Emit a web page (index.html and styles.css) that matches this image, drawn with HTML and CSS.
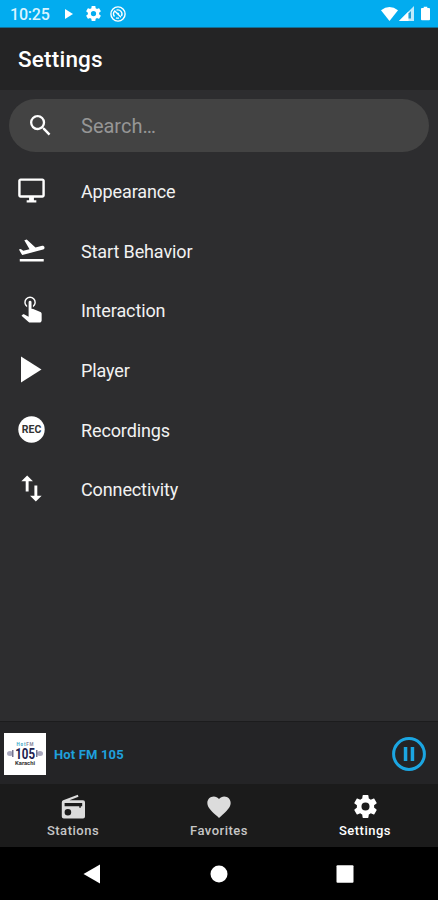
FILE: index.html
```html
<!DOCTYPE html>
<html lang="en">
<head>
<meta charset="utf-8">
<title>Settings</title>
<link rel="stylesheet" href="styles.css">
</head>
<body>
<svg class="defs" aria-hidden="true"><symbol id="gear" viewBox="2 2 20 20"><path d="M12,15.5A3.5,3.5 0 0,1 8.5,12A3.5,3.5 0 0,1 12,8.5A3.5,3.5 0 0,1 15.5,12A3.5,3.5 0 0,1 12,15.5M19.43,12.97C19.47,12.65 19.5,12.33 19.5,12C19.5,11.67 19.47,11.34 19.43,11L21.54,9.37C21.73,9.22 21.78,8.95 21.66,8.73L19.66,5.27C19.54,5.05 19.27,4.96 19.05,5.05L16.56,6.05C16.04,5.66 15.5,5.32 14.87,5.07L14.5,2.42C14.46,2.18 14.25,2 14,2H10C9.75,2 9.54,2.18 9.5,2.42L9.13,5.07C8.5,5.32 7.96,5.66 7.44,6.05L4.95,5.05C4.73,4.96 4.46,5.05 4.34,5.27L2.34,8.73C2.21,8.95 2.27,9.22 2.46,9.37L4.57,11C4.53,11.34 4.5,11.67 4.5,12C4.5,12.33 4.53,12.65 4.57,12.97L2.46,14.63C2.27,14.78 2.21,15.05 2.34,15.27L4.34,18.73C4.46,18.95 4.73,19.03 4.95,18.95L7.44,17.94C7.96,18.34 8.5,18.68 9.13,18.93L9.5,21.58C9.54,21.82 9.75,22 10,22H14C14.25,22 14.46,21.82 14.5,21.58L14.87,18.93C15.5,18.67 16.04,18.34 16.56,17.94L19.05,18.95C19.27,19.03 19.54,18.95 19.66,18.73L21.66,15.27C21.78,15.05 21.73,14.78 21.54,14.63L19.43,12.97Z"/></symbol></svg>
<div class="screen">
  <div class="status">
    <span class="clock">10:25</span>
    <svg class="st-play" viewBox="0 0 8 10"><path d="M0 0L8 5L0 10Z"/></svg>
    <svg class="st-gear"><use href="#gear"/></svg>
    <svg class="st-sync" viewBox="0 0 16 16"><circle cx="8" cy="8" r="7.1" class="line"/><path class="line" d="M4.500 10.500A4.200 4.200 0 0 1 4.800 5L11 11.200M6.500 4.100A4.200 4.200 0 0 1 11.500 10M7.500 7L8.800 8.300M6 11.800A4.200 4.200 0 0 0 9 11.900"/></svg>
    <span class="grow"></span>
    <svg class="st-wifi" viewBox="0 0 17 14"><path d="M0 3.2Q8.500 -3 17 3.200L8.500 14Z"/></svg>
    <svg class="st-cell" viewBox="0 0 15 15"><path d="M0 15L15 0V15Z" opacity=".75"/><path d="M0 15L9.500 5.500V15Z"/><path class="cut" d="M9.500 7.500L12 5V12.500H9.500Z"/></svg>
    <svg class="st-bat" viewBox="0 0 10 15"><path d="M3 0H7V1.500H9Q10 1.500 10 2.500V14Q10 15 9 15H1Q0 15 0 14V2.500Q0 1.500 1 1.500H3Z"/></svg>
  </div>
  <header class="header"><h1>Settings</h1></header>
  <main class="content">
    <div class="search">
      <svg class="search-icon" viewBox="3 3 18 18"><path d="M15.500 14h-.79l-.28-.27A6.471 6.471 0 0 0 16 9.500 6.500 6.500 0 1 0 9.500 16c1.610 0 3.090-.59 4.230-1.570l.27.28v.79l5 4.990L20.490 19l-4.990-5zm-6 0C7.010 14 5 11.990 5 9.500S7.010 5 9.500 5 14 7.010 14 9.500 11.990 14 9.500 14z"/></svg>
      <span>Search…</span>
    </div>
    <ul class="list">
      <li><svg viewBox="0 0 24 24"><path d="M21 2H3c-1.100 0-2 .9-2 2v12c0 1.100.9 2 2 2h7v2H8v2h8v-2h-2v-2h7c1.100 0 2-.9 2-2V4c0-1.100-.9-2-2-2zm0 14H3V4h18v12z"/></svg><span>Appearance</span></li>
      <li><svg viewBox="0.300 0.800 23 23"><path d="M2.500 19h19v2h-19zm19.570-9.360c-.21-.8-1.040-1.280-1.840-1.060L14.920 10l-6.900-6.430-1.930.51 4.140 7.170-4.970 1.330-1.970-1.540-1.450.39 1.820 3.160.77 1.330 1.600-.43 5.310-1.420 4.350-1.160L21 11.490c.81-.23 1.280-1.050 1.070-1.850z"/></svg><span>Start Behavior</span></li>
      <li><svg viewBox="2 4 20 20"><path d="M10,9A1,1 0 0,1 11,8A1,1 0 0,1 12,9V13.47L13.21,13.6L18.15,15.79C18.68,16.03 19,16.56 19,17.14V21.5C18.97,22.32 18.32,22.97 17.5,23H11C10.62,23 10.26,22.85 10,22.57L5.1,18.37L5.84,17.6C6.03,17.39 6.3,17.28 6.58,17.28H6.8L10,19V9M11,5A4,4 0 0,1 15,9C15,10.5 14.2,11.77 13,12.46V11.24C13.61,10.69 14,9.89 14,9A3,3 0 0,0 11,6A3,3 0 0,0 8,9C8,9.89 8.39,10.69 9,11.24V12.46C7.8,11.77 7,10.5 7,9A4,4 0 0,1 11,5Z"/></svg><span>Interaction</span></li>
      <li><svg viewBox="0 0 29 29"><path d="M4 1.500L24.500 14.500L4 27.500Z"/></svg><span>Player</span></li>
      <li><svg viewBox="0 0 29 29"><circle cx="14.500" cy="14.500" r="13.200"/><text class="rec" x="4.800" y="18.300" textLength="19.500">REC</text></svg><span>Recordings</span></li>
      <li><svg viewBox="2 2 20 20"><path d="M9,3L5,7H8V14H10V7H13M16,17V10H14V17H11L15,21L19,17H16Z"/></svg><span>Connectivity</span></li>
    </ul>
  </main>
  <section class="player">
    <svg class="cover" viewBox="0 0 42 42">
      <rect width="42" height="42" fill="#fff"/>
      <g fill="#a9a9bf"><ellipse cx="6" cy="20.500" rx="3" ry="2.500"/><ellipse cx="36" cy="20.500" rx="3" ry="2.500"/></g>
      <g fill="#74748f"><rect x="8" y="17" width="1.500" height="7"/><rect x="32" y="17" width="1.500" height="7"/></g>
      <text class="c-top" x="12.500" y="12.500" textLength="17"><tspan fill="#39a8c8">Hot</tspan><tspan fill="#85859a">FM</tspan></text>
      <text class="c-num" x="11.200" y="25.600" textLength="19.800" lengthAdjust="spacingAndGlyphs">105</text>
      <text class="c-bot" x="11" y="31.600" textLength="20" lengthAdjust="spacingAndGlyphs">Karachi</text>
    </svg>
    <span class="track">Hot FM 105</span>
    <svg class="pause" viewBox="0 0 36 36"><circle cx="18" cy="18" r="15.400"/><path d="M12.800 11H16.300V25H12.800ZM19.700 11H23.200V25H19.700Z"/></svg>
  </section>
  <nav class="tabs">
    <div class="tab">
      <svg viewBox="0 0 28 28"><path fill-rule="evenodd" d="M4.200 7.300L18.800 1.800L19.500 3.700L10.500 7.200H24Q26 7.200 26 9.200V23.500Q26 25.500 24 25.500H4.800Q2.800 25.500 2.800 23.500V9.500Q2.800 7.900 4.200 7.300ZM5.600 10V13.200H20.300V14.800H21.800V13.200H23.200V10ZM8.900 16A3.300 3.300 0 1 0 8.900 22.600A3.300 3.300 0 1 0 8.900 16Z"/></svg>
      <span>Stations</span>
    </div>
    <div class="tab">
      <svg viewBox="0 0 24 24"><path d="M12 21.350l-1.450-1.320C5.400 15.360 2 12.280 2 8.500 2 5.420 4.420 3 7.500 3c1.740 0 3.410.81 4.500 2.090C13.090 3.810 14.760 3 16.500 3 19.580 3 22 5.420 22 8.500c0 3.780-3.400 6.860-8.550 11.540L12 21.350z"/></svg>
      <span>Favorites</span>
    </div>
    <div class="tab active">
      <svg class="tab-gear"><use href="#gear"/></svg>
      <span>Settings</span>
    </div>
  </nav>
  <div class="sysnav">
    <svg viewBox="0 0 18 20"><path d="M0.500 10L17 0.500V19.500Z"/></svg>
    <svg viewBox="0 0 18 20"><circle cx="9" cy="10" r="8.500"/></svg>
    <svg viewBox="0 0 18 20"><rect x="0.500" y="1.300" width="17" height="17.400" rx="1"/></svg>
  </div>
</div>
</body>
</html>
```
FILE: styles.css
```css
* { box-sizing: border-box; }
body { margin: 0; background: #000; font-family: Roboto, sans-serif; }
svg { display: block; flex: none; fill: #fff; }
.defs { position: absolute; width: 0; height: 0; }
.screen { width: 438px; height: 900px; display: flex; flex-direction: column; overflow: hidden; background: #2d2d2f; color: #f2f2f2; }

.status { height: 28px; flex: none; display: flex; align-items: center; background: #02acef; padding: 0 8px 0 10px; border-bottom: 1px solid #146f96; }
.clock { width: 55px; font-size: 16px; font-weight: 500; color: #d9f4ff; letter-spacing: -.2px; padding-top: 2px; }
.st-play { width: 8px; height: 10px; margin-right: 13px; }
.st-gear { width: 15px; height: 15px; margin-right: 9px; }
.st-sync { width: 16px; height: 16px; }
.line { fill: none; stroke: #fff; stroke-width: 1.4; }
.grow { flex: 1; }
.st-wifi { width: 17px; height: 14px; margin-right: 1px; }
.st-cell { width: 15px; height: 15px; margin-right: 7px; }
.cut { fill: #249fd2; }
.st-bat { width: 9px; height: 15px; }

.header { height: 62px; flex: none; display: flex; align-items: center; padding-left: 18px; background: #242425; }
h1 { margin: 0; font-size: 22.5px; line-height: 26px; font-weight: 500; letter-spacing: .2px; color: #fff; }

.content { flex: 1; min-height: 0; padding: 9px 9px 0; }
.search { height: 53px; border-radius: 27px; display: flex; align-items: center; padding-left: 21px; background: #434343; color: #969696; font-size: 20px; }
.search-icon { width: 21px; height: 21px; margin: 0 30px 1px 0; }
.list { list-style: none; margin: 9px 0 0; padding: 0 0 0 8px; }
.list li { height: 59.6px; display: flex; align-items: center; font-size: 18px; letter-spacing: -.12px; }
.list svg { width: 29px; height: 29px; margin-right: 35px; }
.list span { padding-top: 2px; }
.rec { font: 700 10.5px Roboto, sans-serif; letter-spacing: 0; fill: #333; }

.player { height: 63px; flex: none; display: flex; align-items: center; padding: 1px 11px 0 4px; background: #242426; border-top: 1px solid #1c1c1d; }
.cover { width: 42px; height: 42px; margin-right: 8px; }
.c-top { font: 700 4.5px Roboto, sans-serif; }
.c-num { font: 700 15px Roboto, sans-serif; fill: #20204e; }
.c-bot { font: 700 5px Roboto, sans-serif; fill: #333; }
.track { flex: 1; font-size: 13px; font-weight: 700; letter-spacing: .15px; color: #1fa0dc; padding-top: 1px; }
.pause { width: 36px; height: 36px; fill: #1ba6e2; }
.pause circle { fill: none; stroke: #1ba6e2; stroke-width: 3; }

.tabs { height: 63px; flex: none; display: grid; grid-template-columns: repeat(3, 1fr); background: #1b1b1b; }
.tab { display: flex; flex-direction: column; align-items: center; padding-top: 9px; font-size: 13px; line-height: 16px; font-weight: 500; letter-spacing: .5px; color: #c6c6c6; }
.tab svg { width: 28px; height: 28px; margin-bottom: 2px; fill: #dcdcdc; }
.tab.active { color: #fff; }
.tab .tab-gear { width: 23px; height: 23px; margin: 2px 0 5px; fill: #fff; }

.sysnav { height: 53px; flex: none; display: flex; justify-content: space-between; align-items: center; padding: 0 84px 0 83px; background: #000; }
.sysnav svg { width: 18px; height: 20px; }
```
